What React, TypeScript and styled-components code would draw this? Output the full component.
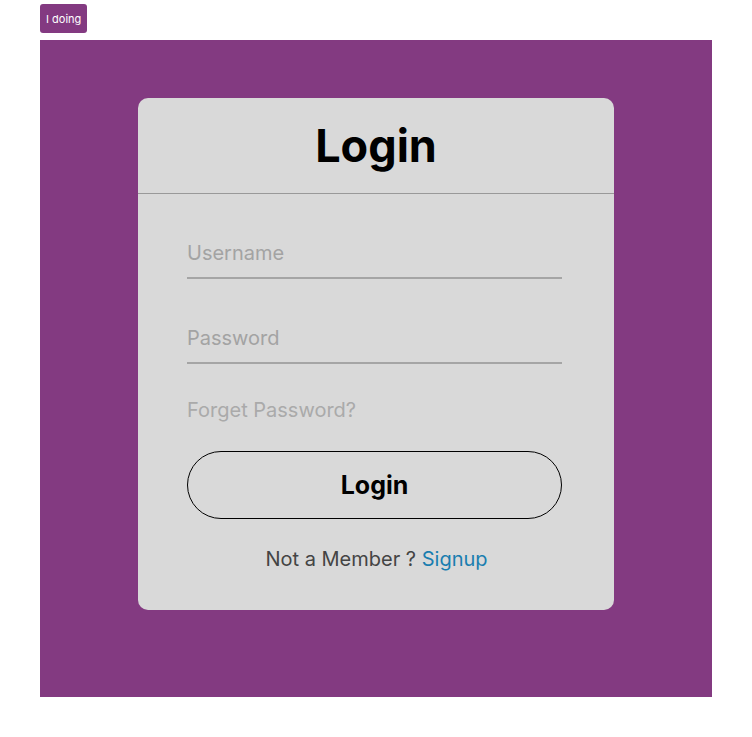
import React from "react";
import styled, { createGlobalStyle } from "styled-components";

const Global = createGlobalStyle`
  html, body { margin: 0; padding: 0; background: #ffffff; }
  body { font-family: Inter, "Noto Sans", sans-serif; }
  * { box-sizing: border-box; }
`;

const Page = styled.div`
  display: flex;
  flex-direction: column;
  align-items: flex-start;
  padding: 4px 40px 0 40px;
  gap: 7px;
`;

const TagButton = styled.button`
  height: 29px;
  padding: 0 6px;
  border: none;
  border-radius: 3px;
  background: #833a81;
  color: #ffffff;
  font-family: Inter, sans-serif;
  font-size: 11px;
  cursor: pointer;
`;

const Panel = styled.div`
  width: 672px;
  height: 657px;
  background: #833a81;
  display: flex;
  justify-content: center;
  align-items: flex-start;
  padding-top: 58px;
`;

const Card = styled.div`
  width: 476px;
  height: 512px;
  background: #d9d9d9;
  border-radius: 10px;
  display: flex;
  flex-direction: column;
`;

const Header = styled.h1`
  margin: 0;
  height: 96px;
  display: flex;
  align-items: center;
  justify-content: center;
  padding-bottom: 1px;
  font-size: 45px;
  font-weight: 700;
  color: #000;
  border-bottom: 1px solid #999999;
`;

const Form = styled.form`
  display: flex;
  flex-direction: column;
  align-items: flex-start;
  padding: 0 49px;
`;

const Field = styled.input<{ $top: number }>`
  width: 375px;
  height: 43px;
  margin-top: ${(p) => p.$top}px;
  border: none;
  border-bottom: 2px solid #a5a5a5;
  background: transparent;
  font-family: Inter, sans-serif;
  font-size: 20px;
  color: #333;
  padding: 0 0 8px 0;
  outline: none;
  &::placeholder { color: #a3a3a3; }
`;

const Forgot = styled.div`
  margin-top: 34px;
  font-size: 20px;
  color: #aaaaaa;
  line-height: 24px;
`;

const Submit = styled.button`
  margin-top: 29px;
  width: 375px;
  height: 68px;
  border: 1px solid #000;
  border-radius: 34px;
  background: transparent;
  font-family: Inter, sans-serif;
  font-size: 25px;
  font-weight: 700;
  color: #000;
  cursor: pointer;
`;

const Footer = styled.p`
  align-self: stretch;
  margin: 28px 0 0 0;
  padding-left: 1px;
  text-align: center;
  font-size: 20px;
  line-height: 24px;
  color: #444444;
`;

const SignupLink = styled.a`
  color: #1a7eb0;
  text-decoration: none;
`;

export default function App() {
  return (
    <>
      <Global />
      <Page>
        <TagButton>I doing</TagButton>
        <Panel>
          <Card>
            <Header>Login</Header>
            <Form onSubmit={(e) => e.preventDefault()}>
              <Field $top={42} placeholder="Username" />
              <Field $top={42} type="password" placeholder="Password" />
              <Forgot>Forget Password?</Forgot>
              <Submit type="submit">Login</Submit>
              <Footer>
                Not a Member ? <SignupLink href="#">Signup</SignupLink>
              </Footer>
            </Form>
          </Card>
        </Panel>
      </Page>
    </>
  );
}
